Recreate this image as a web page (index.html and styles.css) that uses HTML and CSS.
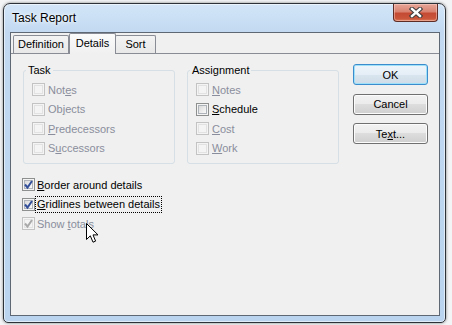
FILE: index.html
```html
<!DOCTYPE html>
<html>
<head>
	<title>Task Report</title>
	<meta charset="utf-8">
	<link rel="stylesheet" href="styles.css">
</head>
<body>
	<div id="window">
		<div id="titlebar">
			<span id="title">Task Report</span>
			<div id="close">
				<svg width="14" height="11" viewBox="0 0 14 11">
					<path d="M3 2 L11 9 M11 2 L3 9" stroke="#3b3b3b" stroke-width="4.4" stroke-linecap="square"/>
					<path d="M3 2 L11 9 M11 2 L3 9" stroke="#fff" stroke-width="2.4" stroke-linecap="square"/>
				</svg>
			</div>
		</div>
		<div id="client">
			<div id="tabs">
				<div class="tab def">Definition</div>
				<div class="tab det active">Details</div>
				<div class="tab srt">Sort</div>
			</div>
			<div id="panel">
				<div id="main">
					<div id="groups">
						<fieldset class="group">
							<legend>Task</legend>
							<div class="check off"><span class="box"></span><span class="label">Not<u>e</u>s</span></div>
							<div class="check off"><span class="box"></span><span class="label">Ob<u>j</u>ects</span></div>
							<div class="check off"><span class="box"></span><span class="label"><u>P</u>redecessors</span></div>
							<div class="check off"><span class="box"></span><span class="label">S<u>u</u>ccessors</span></div>
						</fieldset>
						<fieldset class="group">
							<legend>Assignment</legend>
							<div class="check off"><span class="box"></span><span class="label"><u>N</u>otes</span></div>
							<div class="check"><span class="box"></span><span class="label"><u>S</u>chedule</span></div>
							<div class="check off"><span class="box"></span><span class="label"><u>C</u>ost</span></div>
							<div class="check off"><span class="box"></span><span class="label"><u>W</u>ork</span></div>
						</fieldset>
					</div>
					<div id="options">
						<div class="check">
							<span class="box"><svg class="tick" width="11" height="11" viewBox="0 0 11 11"><path d="M2 5.5 L4.5 8.5 L9 2" fill="none" stroke-width="2"/></svg></span>
							<span class="label"><u>B</u>order around details</span>
						</div>
						<div class="check">
							<span class="box"><svg class="tick" width="11" height="11" viewBox="0 0 11 11"><path d="M2 5.5 L4.5 8.5 L9 2" fill="none" stroke-width="2"/></svg></span>
							<span class="label focus"><u>G</u>ridlines between details</span>
						</div>
						<div class="check off">
							<span class="box"><svg class="tick" width="11" height="11" viewBox="0 0 11 11"><path d="M2 5.5 L4.5 8.5 L9 2" fill="none" stroke-width="2"/></svg></span>
							<span class="label">Show <u>t</u>otals</span>
						</div>
					</div>
				</div>
				<div id="buttons">
					<button class="default">OK</button>
					<button>Cancel</button>
					<button>Te<u>x</u>t...</button>
				</div>
			</div>
		</div>
	</div>
	<svg id="cursor" width="13" height="21" viewBox="0 0 13 21">
		<path d="M0.5 0.5 L0.5 16.5 L4.3 12.8 L7 19.2 L9.6 18.1 L7 11.9 L12 11.9 Z" fill="#fff" stroke="#000" stroke-width="1" stroke-linejoin="miter"/>
	</svg>
</body>
</html>
```

FILE: styles.css
```css
* {
	box-sizing: border-box;
}
body, html {
	margin: 0px;
	height: 100%;
}
body {
	background: #f3f4f5;
	font-family: "Liberation Sans", Arial, sans-serif;
	font-size: 11px;
	padding: 3px 0 0 3px;
}
#window {
	width: 443px;
	height: 320px;
	border: 1px solid #2d3138;
	border-radius: 7px 7px 5px 5px;
	padding: 0 5px 6px 6px;
	background: linear-gradient(to bottom, #d3e6f8 0px, #c2d9f1 28px, #bad4ef 100%);
	box-shadow: 0 0 3px rgba(0, 0, 0, 0.5), inset 0 0 0 1px rgba(255, 255, 255, 0.55);
}
#titlebar {
	height: 28px;
	display: flex;
	align-items: center;
	justify-content: space-between;
	padding-left: 2px;
}
#title {
	font-size: 12px;
	color: #000;
	text-shadow: 0 0 6px #fff, 0 0 3px #fff;
}
#close {
	align-self: flex-start;
	width: 45px;
	height: 18px;
	margin-right: 2px;
	border: 1px solid #5e2b25;
	border-top: none;
	border-radius: 0 0 4px 4px;
	background: linear-gradient(to bottom, #e7a698 0%, #d98371 45%, #c44a34 55%, #c9553a 85%, #dd7a5a 100%);
	box-shadow: inset 0 0 0 1px rgba(255, 220, 210, 0.45);
	display: flex;
	align-items: center;
	justify-content: center;
}
#client {
	width: 430px;
	height: 284px;
	border: 1px solid #5d6874;
	background: #f0f0f0;
	display: flex;
	flex-direction: column;
}
#tabs {
	display: flex;
	align-items: flex-end;
	height: 20px;
	padding-left: 2px;
}
.tab {
	height: 18px;
	border: 1px solid #898c95;
	border-bottom: none;
	border-radius: 2px 2px 0 0;
	background: linear-gradient(to bottom, #f3f3f3, #e8e8e8);
	text-align: center;
	line-height: 17px;
}
.tab.def {
	width: 56px;
}
.tab.det {
	width: 47px;
}
.tab.srt {
	width: 41px;
	margin-left: -1px;
}
.tab.active {
	height: 21px;
	margin-bottom: -1px;
	position: relative;
	z-index: 1;
	background: linear-gradient(to bottom, #fbfbfb, #f0f0f0);
	line-height: 18px;
}
#panel {
	flex: 1;
	border-top: 1px solid #898c95;
	display: flex;
	gap: 14px;
	padding: 10px 0 0 12px;
}
#main {
	width: 316px;
}
#groups {
	display: flex;
	gap: 12px;
}
.group {
	width: 152px;
	margin: 0;
	padding: 3px 8px 5px 8px;
	border: 1px solid #d5dfe5;
	border-radius: 3px;
	min-width: 0;
}
.group legend {
	padding: 0 2px;
	margin-left: -6px;
	line-height: 13px;
	color: #000;
}
.check {
	display: flex;
	align-items: center;
	height: 19.5px;
	color: #000;
}
.check.off {
	color: #8a8e9c;
}
.box {
	width: 13px;
	height: 13px;
	margin-right: 3px;
	border: 1px solid #8e8f8f;
	background: #f4f4f4;
	position: relative;
	flex: none;
}
.box::before {
	content: "";
	position: absolute;
	left: 1px;
	top: 1px;
	right: 1px;
	bottom: 1px;
	border: 1px solid #aeb3b9;
	background: linear-gradient(135deg, #dadada, #fafafa);
}
.off .box {
	border-color: #c3c3c3;
}
.off .box::before {
	border-color: #e2e2e2;
	background: #f4f4f4;
}
.tick {
	position: absolute;
	left: 0;
	top: 0;
	stroke: #34509a;
}
.off .tick {
	stroke: #a9a9a9;
}
#options {
	margin-top: 11px;
	margin-left: -1px;
}
#options .box {
	margin-right: 2px;
}
.label.focus {
	outline: 1px dotted #000;
	outline-offset: 1px;
	line-height: 13px;
}
#buttons {
	display: flex;
	flex-direction: column;
	gap: 8.5px;
	width: 75px;
}
button {
	height: 21px;
	border: 1px solid #707070;
	border-radius: 3px;
	background: linear-gradient(to bottom, #f2f2f2 0%, #ebebeb 50%, #dddddd 50%, #cfcfcf 100%);
	box-shadow: inset 0 0 0 1px #fcfcfc;
	font-family: "Liberation Sans", Arial, sans-serif;
	font-size: 11px;
	color: #000;
	padding: 0;
}
button.default {
	border-color: #3a8ccc;
	background: linear-gradient(to bottom, #eef5fb 0%, #e5eef6 50%, #d9e5ef 50%, #cfdce7 100%);
	box-shadow: inset 0 0 0 1px #9ee1f9;
}
#cursor {
	position: absolute;
	left: 86px;
	top: 223px;
}
```
